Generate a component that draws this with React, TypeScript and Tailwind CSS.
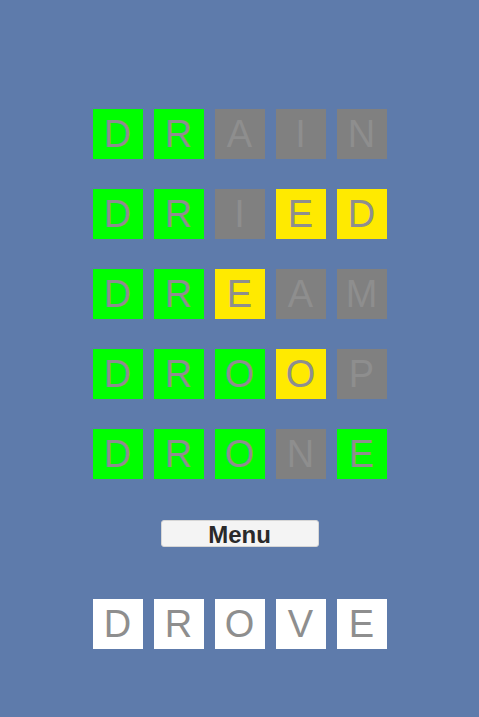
const rows: { word: string; colors: string }[] = [
  { word: "DRAIN", colors: "ggxxx" },
  { word: "DRIED", colors: "ggxyy" },
  { word: "DREAM", colors: "ggyxx" },
  { word: "DROOP", colors: "gggyx" },
  { word: "DRONE", colors: "gggxg" },
]

function tileBg(c: string) {
  if (c === "g") return "bg-[#00ff00]"
  if (c === "y") return "bg-[#ffea00]"
  if (c === "w") return "bg-white"
  return "bg-[#808080]"
}

function Tile({ letter, color }: { letter: string; color: string }) {
  return (
    <div
      className={`w-[50px] h-[50px] flex items-center justify-center text-[38px] leading-none text-[#8e8e8e] ${tileBg(color)}`}
    >
      {letter}
    </div>
  )
}

export default function App() {
  return (
    <div
      className="w-[479px] h-[717px] bg-[#5e7bab] flex flex-col items-center pt-[109px]"
      style={{ fontFamily: '"Liberation Sans", Arial, sans-serif' }}
    >
      <div className="flex flex-col gap-[30px]">
        {rows.map((row, i) => (
          <div key={i} className="flex gap-[11px]">
            {row.word.split("").map((ch, j) => (
              <Tile key={j} letter={ch} color={row.colors[j]} />
            ))}
          </div>
        ))}
      </div>
      <button className="mt-[41px] w-[158px] h-[27px] pt-[2px] bg-[#f4f4f4] border border-[#d6d6d6] rounded-[3px] text-[24px] font-bold leading-none text-[#2a2a2a]">
        Menu
      </button>
      <div className="mt-[52px] flex gap-[11px]">
        {"DROVE".split("").map((ch, j) => (
          <Tile key={j} letter={ch} color="w" />
        ))}
      </div>
    </div>
  )
}
